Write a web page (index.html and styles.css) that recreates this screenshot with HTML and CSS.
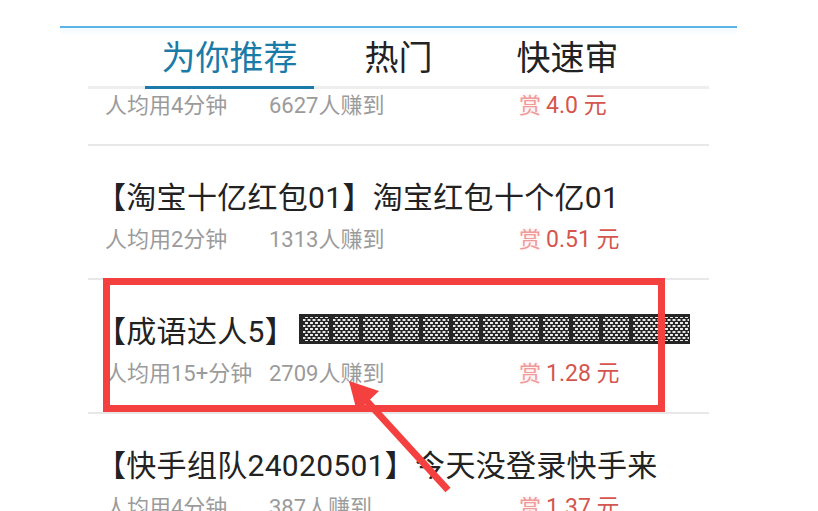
FILE: index.html
```html
<!DOCTYPE html>
<html lang="zh-CN">
<head>
<meta charset="utf-8">
<title>任务列表</title>
<link rel="stylesheet" href="styles.css">
</head>
<body>
<div class="page">
  <header class="header">
    <nav class="tabs">
      <div class="tab active">为你推荐</div>
      <div class="tab">热门</div>
      <div class="tab">快速审</div>
    </nav>
  </header>
  <main class="viewport">
    <ul class="list">
      <li class="item">
        <div class="title">【抖音关注01】抖音关注任务</div>
        <div class="meta"><span>人均用4分钟</span><span>6627人赚到</span><span class="reward"><b class="shang">赏</b>4.0 元</span></div>
      </li>
      <li class="item">
        <div class="title">【淘宝十亿红包01】淘宝红包十个亿01</div>
        <div class="meta"><span>人均用2分钟</span><span>1313人赚到</span><span class="reward"><b class="shang">赏</b>0.51 元</span></div>
      </li>
      <li class="item">
        <div class="title">【成语达人5】<span class="redact" aria-label="已隐藏"></span></div>
        <div class="meta"><span>人均用15+分钟</span><span>2709人赚到</span><span class="reward"><b class="shang">赏</b>1.28 元</span></div>
      </li>
      <li class="item">
        <div class="title">【快手组队24020501】今天没登录快手来</div>
        <div class="meta"><span>人均用4分钟</span><span>387人赚到</span><span class="reward"><b class="shang">赏</b>1.37 元</span></div>
      </li>
    </ul>
  </main>
  <div class="mark-box"></div>
  <svg class="mark-arrow" width="818" height="511" viewBox="0 0 818 511">
    <line x1="364" y1="398" x2="448" y2="490" stroke="#f4413f" stroke-width="7"/>
    <polygon points="349,381 379,391 357,412" fill="#f4413f"/>
  </svg>
</div>
</body>
</html>
```

FILE: styles.css
```css
* { box-sizing: border-box; }
html, body { margin: 0; padding: 0; background: #fff; }
body {
  font-family: Roboto, "Noto Sans CJK SC", sans-serif;
  width: 818px;
  height: 511px;
  overflow: hidden;
}
.page { position: relative; width: 818px; height: 511px; padding-top: 26px; }

.header {
  margin-left: 60px;
  width: 677px;
  border-top: 2px solid #5ab4e6;
  background: linear-gradient(#f3fafe, #fff 8px);
}
.tabs {
  display: flex;
  margin-left: 28px;
  width: 621px;
  padding-left: 57px;
  border-bottom: 3px solid #eeeeee;
}
.tab {
  width: 169px;
  height: 61px;
  margin-bottom: -3px;
  padding-bottom: 3px;
  display: flex;
  align-items: center;
  justify-content: center;
  font-size: 34px;
  color: #222;
  border-bottom: 3px solid transparent;
}
.tab.active { color: #1a7aa8; border-bottom-color: #1a7aa8; }

.viewport { height: 422px; overflow: hidden; }
.list { list-style: none; margin: -77px 0 0 88px; padding: 0; width: 621px; }
.item {
  height: 134px;
  padding: 29px 0 0 17px;
  border-bottom: 2px solid #e8e8e8;
}
.title {
  display: flex;
  align-items: center;
  height: 40px;
  margin-left: -9px;
  font-size: 30px;
  letter-spacing: 0.3px;
  color: #222;
  white-space: nowrap;
}
.redact {
  display: inline-block;
  width: 391px;
  height: 30px;
  margin-left: 4px;
  background-color: #262626;
  background-image:
    linear-gradient(to right, #262626 0 4px, transparent 4px),
    linear-gradient(#262626 0 3px, transparent 3px 27px, #262626 27px),
    radial-gradient(circle, #eeeeee 0 1.1px, transparent 1.5px),
    radial-gradient(circle, #eeeeee 0 1.1px, transparent 1.5px);
  background-size: 30px 100%, 100% 100%, 5px 6px, 5px 6px;
  background-position: 0 0, 0 0, 0 0, 2.5px 3px;
}
.meta {
  display: grid;
  grid-template-columns: 164px 250px auto;
  height: 30px;
  margin-top: 5px;
  align-items: center;
  font-size: 22px;
  color: #9b9b9b;
  white-space: nowrap;
}
.reward { color: #d4564e; font-size: 23px; }
.shang {
  font-weight: normal;
  font-size: 22px;
  color: #f09a9a;
  text-shadow: 0 0 4px #fde3e3;
  margin-right: 5px;
}

.mark-box {
  position: absolute;
  left: 103px;
  top: 278px;
  width: 562px;
  height: 134px;
  border: 7px solid #f4413f;
}
.mark-arrow { position: absolute; left: 0; top: 0; }
```
